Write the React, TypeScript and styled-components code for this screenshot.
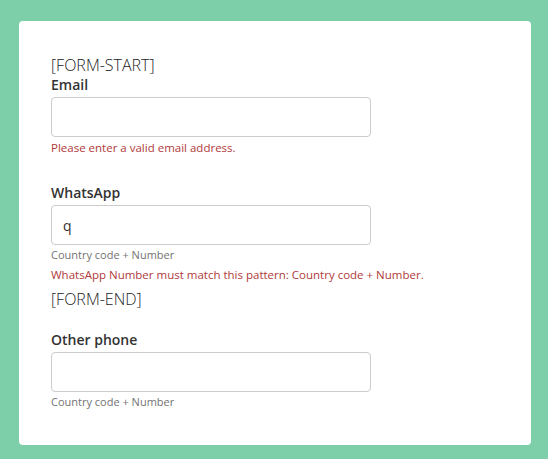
import styled, { createGlobalStyle } from "styled-components";

const GlobalStyle = createGlobalStyle`
  html, body {
    margin: 0;
    padding: 0;
    background: #7dcfa9;
  }
  body {
    font-family: "Open Sans", "Noto Sans", sans-serif;
    color: #333;
  }
`;

const Page = styled.div`
  padding: 21px 17px 14px 19px;
`;

const Card = styled.div`
  background: #fff;
  border-radius: 4px;
  padding: 34px 32px 36px;
`;

const Marker = styled.div<{ $gap?: number }>`
  margin-top: ${(p) => p.$gap ?? 0}px;
  font-size: 16px;
  line-height: 20px;
  font-weight: 300;
  color: #222;
`;

const Field = styled.div<{ $gap?: number }>`
  margin-top: ${(p) => p.$gap ?? 0}px;
`;

const Label = styled.label`
  display: block;
  font-size: 14px;
  line-height: 20px;
  font-weight: 600;
  color: #333;
`;

const Input = styled.input`
  display: block;
  box-sizing: border-box;
  width: 320px;
  height: 40px;
  margin-top: 2px;
  padding: 0 11px;
  border: 1px solid #ccc;
  border-radius: 4px;
  font-family: inherit;
  font-size: 14px;
  color: #333;
  outline: none;
`;

const Help = styled.div`
  margin-top: 2px;
  font-size: 11px;
  line-height: 15px;
  color: #737373;
`;

const Error = styled.div<{ $gap: number }>`
  margin-top: ${(p) => p.$gap}px;
  font-size: 11.5px;
  line-height: 16px;
  color: #b03a3a;
`;

export default function App() {
  return (
    <Page>
      <GlobalStyle />
      <Card>
        <Marker>[FORM-START]</Marker>
        <Field>
          <Label>Email</Label>
          <Input type="email" defaultValue="" />
          <Error $gap={3}>Please enter a valid email address.</Error>
        </Field>
        <Field $gap={27}>
          <Label>WhatsApp</Label>
          <Input type="tel" defaultValue="q" />
          <Help>Country code + Number</Help>
          <Error $gap={5}>
            WhatsApp Number must match this pattern: Country code + Number.
          </Error>
        </Field>
        <Marker $gap={6}>[FORM-END]</Marker>
        <Field $gap={21}>
          <Label>Other phone</Label>
          <Input type="tel" defaultValue="" />
          <Help>Country code + Number</Help>
        </Field>
      </Card>
    </Page>
  );
}
